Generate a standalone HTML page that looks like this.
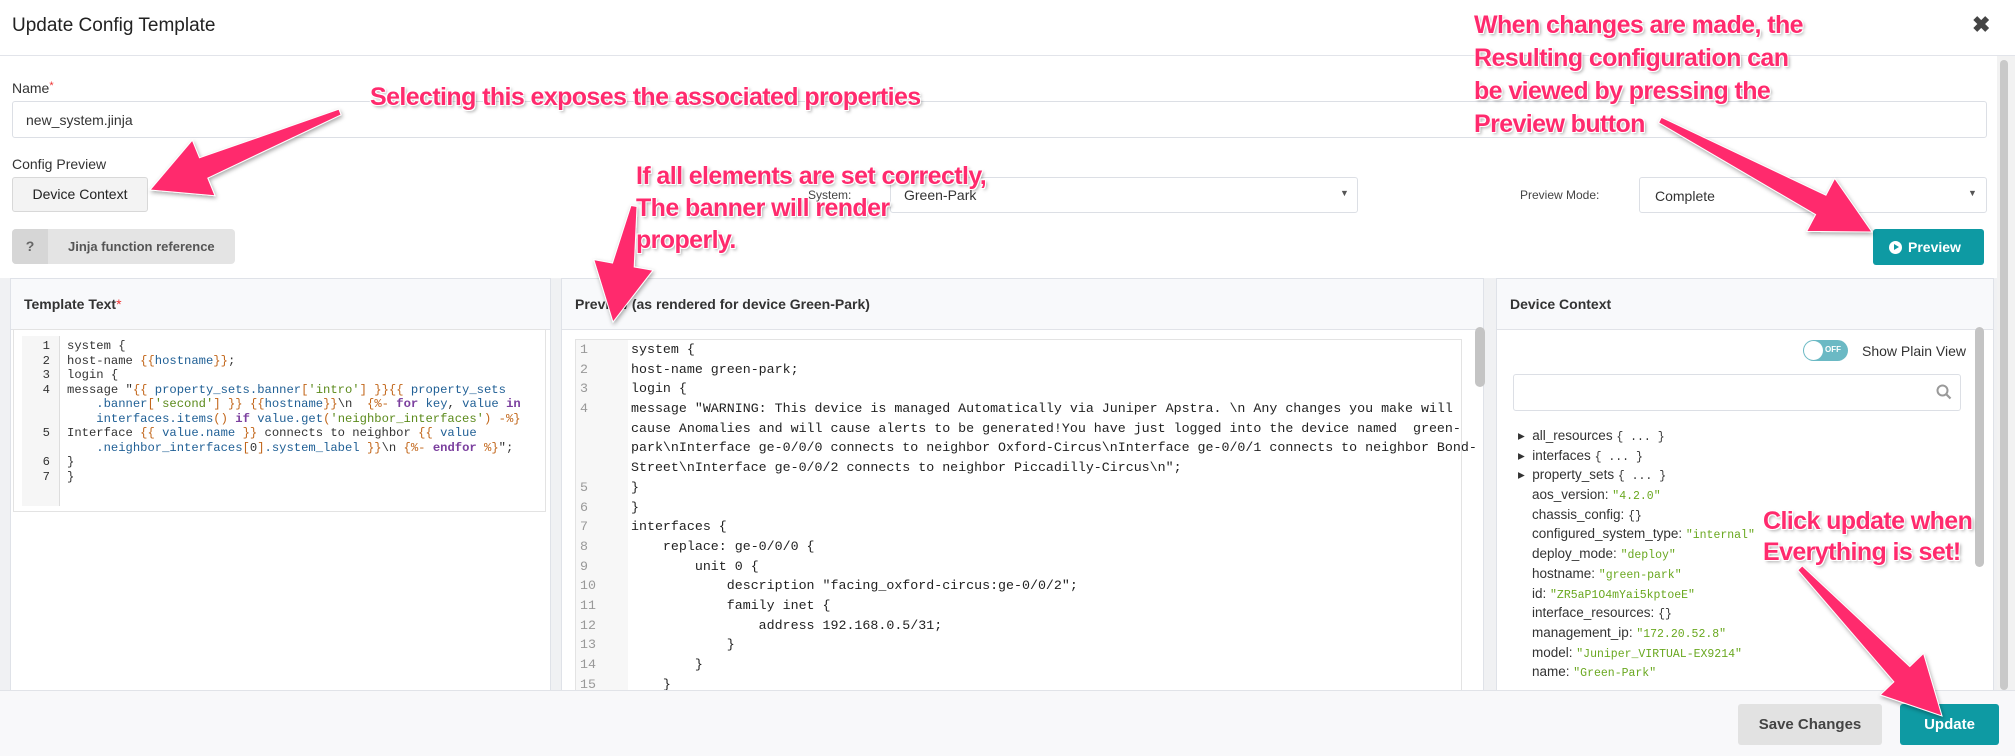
<!DOCTYPE html>
<html><head><meta charset="utf-8">
<style>
*{box-sizing:border-box;margin:0;padding:0}
body{width:2015px;height:756px;overflow:hidden;background:#fff;font-family:"Liberation Sans",sans-serif;color:#333;position:relative;font-size:14px}
.abs{position:absolute}
.hdr{left:0;top:0;width:2015px;height:56px;border-bottom:1px solid #e2e4ea}
.title{left:12px;top:15px;font-size:19px;color:#222}
.close{left:1972px;top:12px;font-size:22px;color:#444;font-weight:bold}
.lbl{font-size:14px;color:#333}
.input{border:1px solid #dcdfe5;border-radius:3px;background:#fff}
.btn{border:1px solid #d8d8d8;border-radius:3px;background:#f3f3f3;font-size:14px;color:#222;text-align:center}
.panel{border:1px solid #dfe2e8;background:#fff}
.ph{height:51px;background:#f8f9fb;border-bottom:1px solid #e1e3e8;font-size:14px;font-weight:bold;color:#333;padding:17px 0 0 13px}
.mono{font-family:"Liberation Mono",monospace}
.tcode div{height:14.5px;line-height:14.5px;font-size:12.2px;white-space:pre}
.pcode div{height:19.7px;line-height:19.7px;font-size:13.3px;white-space:pre;color:#222}
.o{color:#c2661a}.b{color:#1f5f95}.g{color:#5b8a1b}.k{color:#7b3f9e;font-weight:bold}
.ann{color:#ff2a6d;font-weight:bold;font-size:25px;text-shadow:1px 1px 0 #fff,-1px -1px 0 #fff,1px -1px 0 #fff,-1px 1px 0 #fff,2px 2px 3px rgba(0,0,0,.35);line-height:32px;white-space:nowrap;letter-spacing:-0.6px}
.tree div{height:19.7px;line-height:19.7px;font-size:13.5px;color:#333;white-space:nowrap}
.tree .s{font-family:"Liberation Mono",monospace;color:#6aa820;font-size:11.5px}
.tree .m{font-family:"Liberation Mono",monospace;font-size:11.5px}
</style></head><body>
<div class="abs hdr"></div>
<div class="abs title">Update Config Template</div>
<div class="abs close">✖</div>

<div class="abs lbl" style="left:12px;top:80px">Name<span style="color:#e33;font-size:11px;vertical-align:top">*</span></div>
<div class="abs input" style="left:12px;top:101px;width:1975px;height:37px"></div>
<div class="abs" style="left:26px;top:112px;font-size:14px;color:#333">new_system.jinja</div>
<div class="abs lbl" style="left:12px;top:156px">Config Preview</div>
<div class="abs btn" style="left:12px;top:177px;width:136px;height:35px;line-height:33px">Device Context</div>

<div class="abs" style="left:808px;top:188px;font-size:12px;color:#444">System:</div>
<div class="abs input" style="left:890px;top:177px;width:468px;height:36px"></div>
<div class="abs" style="left:904px;top:187px;font-size:14px">Green-Park</div>
<div class="abs" style="left:1340px;top:188px;font-size:9px;color:#555">▼</div>
<div class="abs" style="left:1520px;top:188px;font-size:12px;color:#444">Preview Mode:</div>
<div class="abs input" style="left:1639px;top:177px;width:348px;height:36px"></div>
<div class="abs" style="left:1655px;top:188px;font-size:14px">Complete</div>
<div class="abs" style="left:1968px;top:188px;font-size:9px;color:#555">▼</div>

<div class="abs" style="left:12px;top:229px;width:223px;height:35px;background:#e4e4e4;border-radius:4px"></div>
<div class="abs" style="left:12px;top:229px;width:36px;height:35px;background:#d6d6d6;border-radius:4px 0 0 4px;text-align:center;line-height:35px;font-weight:bold;color:#666">?</div>
<div class="abs" style="left:68px;top:239px;font-size:13px;color:#555;font-weight:bold">Jinja function reference</div>

<div class="abs" style="left:1873px;top:229px;width:111px;height:36px;background:#0e9aa3;border-radius:3px;color:#fff;font-weight:bold;font-size:14px;line-height:36px;padding-left:16px"><span style="display:inline-block;width:13px;height:13px;border-radius:50%;background:#fff;vertical-align:-2px;position:relative;margin-right:6px"><span style="position:absolute;left:5px;top:3px;border-left:5px solid #0e9aa3;border-top:3.5px solid transparent;border-bottom:3.5px solid transparent"></span></span>Preview</div>

<!-- panels -->
<div class="abs" style="left:0;top:278px;width:2015px;height:412px;background:#f0f1f3"></div>
<div class="abs panel" style="left:10px;top:278px;width:541px;height:420px"><div class="ph">Template Text<span style="color:#e33;font-weight:normal">*</span></div></div>
<div class="abs panel" style="left:561px;top:278px;width:923px;height:420px"><div class="ph">Preview (as rendered for device Green-Park)</div></div>
<div class="abs panel" style="left:1496px;top:278px;width:498px;height:420px"><div class="ph">Device Context</div></div>
<div class="abs" style="left:1997px;top:56px;width:18px;height:634px;background:#f2f2f2"></div>
<div class="abs" style="left:2000px;top:60px;width:8px;height:630px;background:#c9c9c9;border-radius:4px"></div>

<!-- template code -->
<div class="abs" style="left:13px;top:329px;width:533px;height:183px;border:1px solid #e3e3e3;background:#fff"></div>
<div class="abs" style="left:22px;top:336px;width:38px;height:170px;background:#f6f6f6;border-right:1px solid #ddd"></div>
<div class="abs mono tcode" style="left:22px;top:339px;width:28px;text-align:right;color:#333">
<div>1</div><div>2</div><div>3</div><div>4</div><div></div><div></div><div>5</div><div></div><div>6</div><div>7</div></div>
<div class="abs mono tcode" style="left:67px;top:339px;color:#333">
<div>system {</div>
<div>host-name <span class="o">{{</span><span class="b">hostname</span><span class="o">}}</span>;</div>
<div>login {</div>
<div>message "<span class="o">{{</span> <span class="b">property_sets.banner</span><span class="o">[</span><span class="g">'intro'</span><span class="o">]</span> <span class="o">}}{{</span> <span class="b">property_sets</span></div>
<div>    <span class="b">.banner</span><span class="o">[</span><span class="g">'second'</span><span class="o">]</span> <span class="o">}}</span> <span class="o">{{</span><span class="b">hostname</span><span class="o">}}</span>\n  <span class="o">{%-</span> <span class="k">for</span> <span class="b">key</span>, <span class="b">value</span> <span class="k">in</span></div>
<div>    <span class="b">interfaces.items</span><span class="o">()</span> <span class="k">if</span> <span class="b">value.get</span><span class="o">(</span><span class="g">'neighbor_interfaces'</span><span class="o">)</span> <span class="o">-%}</span></div>
<div>Interface <span class="o">{{</span> <span class="b">value.name</span> <span class="o">}}</span> connects to neighbor <span class="o">{{</span> <span class="b">value</span></div>
<div>    <span class="b">.neighbor_interfaces</span><span class="o">[</span>0<span class="o">]</span><span class="b">.system_label</span> <span class="o">}}</span>\n <span class="o">{%-</span> <span class="k">endfor</span> <span class="o">%}</span>";</div>
<div>}</div>
<div>}</div>
</div>

<!-- preview code -->
<div class="abs" style="left:575px;top:339px;width:887px;height:360px;border:1px solid #e3e3e3;background:#fff"></div>
<div class="abs" style="left:576px;top:340px;width:52px;height:350px;background:#f7f7f7"></div>
<div class="abs" style="left:1475px;top:327px;width:10px;height:60px;background:#c4c4c4;border-radius:5px"></div>
<div class="abs mono pcode" style="left:580px;top:340px;color:#999">
<div style="color:#999">1</div><div style="color:#999">2</div><div style="color:#999">3</div><div style="color:#999">4</div><div></div><div></div><div></div><div style="color:#999">5</div><div style="color:#999">6</div><div style="color:#999">7</div><div style="color:#999">8</div><div style="color:#999">9</div><div style="color:#999">10</div><div style="color:#999">11</div><div style="color:#999">12</div><div style="color:#999">13</div><div style="color:#999">14</div><div style="color:#999">15</div></div>
<div class="abs mono pcode" style="left:631px;top:340px">
<div>system {</div>
<div>host-name green-park;</div>
<div>login {</div>
<div>message "WARNING: This device is managed Automatically via Juniper Apstra. \n Any changes you make will</div>
<div>cause Anomalies and will cause alerts to be generated!You have just logged into the device named  green-</div>
<div>park\nInterface ge-0/0/0 connects to neighbor Oxford-Circus\nInterface ge-0/0/1 connects to neighbor Bond-</div>
<div>Street\nInterface ge-0/0/2 connects to neighbor Piccadilly-Circus\n";</div>
<div>}</div>
<div>}</div>
<div>interfaces {</div>
<div>    replace: ge-0/0/0 {</div>
<div>        unit 0 {</div>
<div>            description "facing_oxford-circus:ge-0/0/2";</div>
<div>            family inet {</div>
<div>                address 192.168.0.5/31;</div>
<div>            }</div>
<div>        }</div>
<div>    }</div>
</div>

<!-- device context -->
<div class="abs" style="left:1975px;top:327px;width:9px;height:240px;background:#c4c4c4;border-radius:5px"></div>
<div class="abs" style="left:1803px;top:340px;width:45px;height:21px;border-radius:11px;background:#6bb9c4"></div>
<div class="abs" style="left:1804px;top:341px;width:19px;height:19px;border-radius:50%;background:#fff"></div>
<div class="abs" style="left:1825px;top:345px;font-size:8px;color:#fff;font-weight:bold">OFF</div>
<div class="abs" style="left:1862px;top:343px;font-size:14px;color:#333">Show Plain View</div>
<div class="abs input" style="left:1513px;top:374px;width:448px;height:37px"></div>
<svg class="abs" style="left:1936px;top:384px" width="16" height="16"><circle cx="6.5" cy="6.5" r="5" fill="none" stroke="#999" stroke-width="2"/><line x1="10" y1="10" x2="14.5" y2="14.5" stroke="#999" stroke-width="2.2"/></svg>
<div class="abs tree" style="left:1518px;top:426px">
<div>▸ &nbsp;all_resources <span class="m">{ ... }</span></div>
<div>▸ &nbsp;interfaces <span class="m">{ ... }</span></div>
<div>▸ &nbsp;property_sets <span class="m">{ ... }</span></div>
<div style="padding-left:14px">aos_version: <span class="s">"4.2.0"</span></div>
<div style="padding-left:14px">chassis_config: <span class="m">{}</span></div>
<div style="padding-left:14px">configured_system_type: <span class="s">"internal"</span></div>
<div style="padding-left:14px">deploy_mode: <span class="s">"deploy"</span></div>
<div style="padding-left:14px">hostname: <span class="s">"green-park"</span></div>
<div style="padding-left:14px">id: <span class="s">"ZR5aP1O4mYai5kptoeE"</span></div>
<div style="padding-left:14px">interface_resources: <span class="m">{}</span></div>
<div style="padding-left:14px">management_ip: <span class="s">"172.20.52.8"</span></div>
<div style="padding-left:14px">model: <span class="s">"Juniper_VIRTUAL-EX9214"</span></div>
<div style="padding-left:14px">name: <span class="s">"Green-Park"</span></div>
</div>

<!-- footer -->
<div class="abs" style="left:0;top:690px;width:2015px;height:66px;background:#f8f8fa;border-top:1px solid #e1e3e8"></div>
<div class="abs" style="left:1738px;top:704px;width:144px;height:41px;background:#e2e2e2;border-radius:3px;text-align:center;line-height:41px;font-size:15px;color:#444;font-weight:bold">Save Changes</div>
<div class="abs" style="left:1900px;top:704px;width:99px;height:41px;background:#0e9aa3;border-radius:3px;text-align:center;line-height:41px;font-size:15px;color:#fff;font-weight:bold">Update</div>

<!-- annotations -->
<svg class="abs" id="arr" style="left:0;top:0" width="2015" height="756"></svg>
<div class="abs ann" style="left:370px;top:81px">Selecting this exposes the associated properties</div>
<div class="abs ann" style="left:636px;top:160px">If all elements are set correctly,<br>The banner will render<br>properly.</div>
<div class="abs ann" style="left:1474px;top:9px;line-height:33px">When changes are made, the<br>Resulting configuration can<br>be viewed by pressing the<br>Preview button</div>
<div class="abs ann" style="left:1763px;top:506px;line-height:31px">Click update when<br>Everything is set!</div>

<script>
(function(){
var s=document.getElementById('arr'),h='<defs><filter id="sh"><feDropShadow dx="1" dy="2" stdDeviation="2" flood-opacity="0.35"/></filter></defs>';
function a(x1,y1,x2,y2){
 var dx=x2-x1,dy=y2-y1,L=Math.sqrt(dx*dx+dy*dy),ux=dx/L,uy=dy/L,px=-uy,py=ux;
 var hl=58,hw=30,sw0=3,sw1=11;
 var bx=x2-ux*hl,by=y2-uy*hl;
 var p=[[x1+px*sw0,y1+py*sw0],[bx+px*sw1,by+py*sw1],[bx+px*hw,by+py*hw],[x2,y2],[bx-px*hw,by-py*hw],[bx-px*sw1,by-py*sw1],[x1-px*sw0,y1-py*sw0]];
 h+='<polygon filter="url(#sh)" fill="#ff2a6d" stroke="#fff" stroke-width="1" points="'+p.map(function(q){return q[0].toFixed(1)+','+q[1].toFixed(1)}).join(' ')+'"/>';
}
a(340,112,150,190);
a(634,206,613,322);
a(1660,120,1872,232);
a(1800,568,1942,716);
s.innerHTML=h;
})();
</script>
</body></html>
